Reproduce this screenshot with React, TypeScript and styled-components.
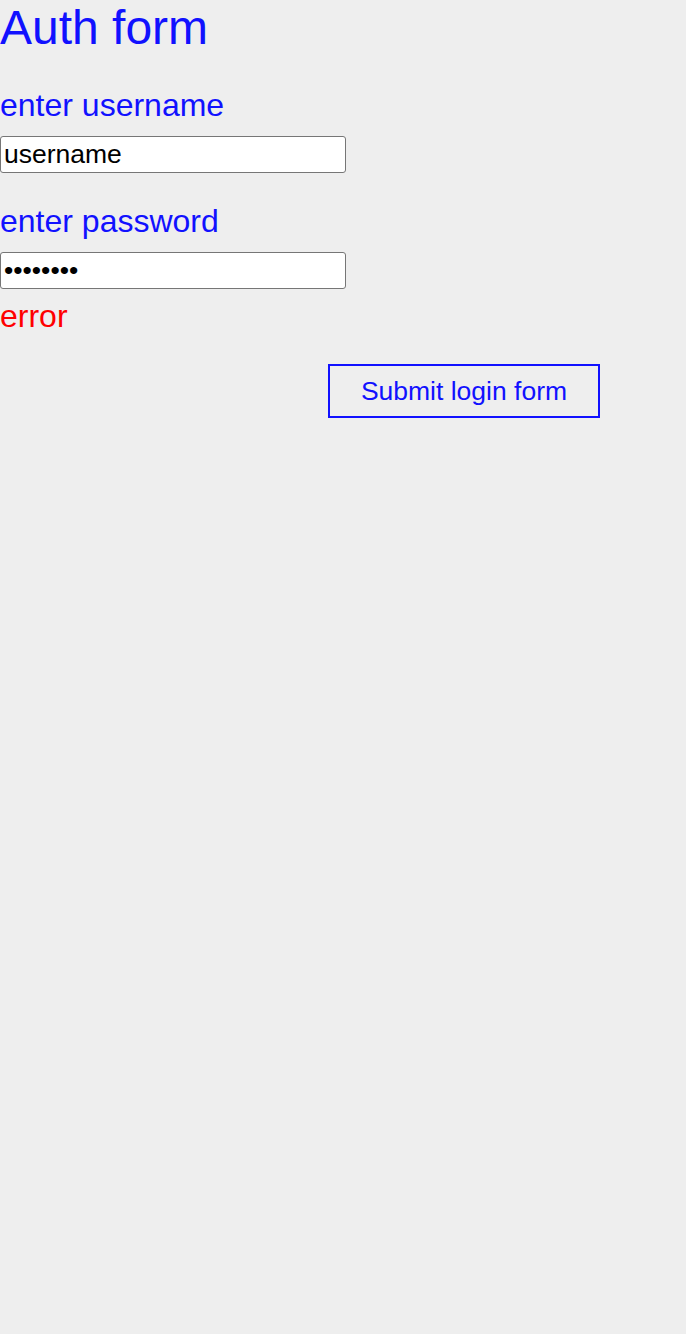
import styled, { createGlobalStyle } from "styled-components";

const GlobalStyle = createGlobalStyle`
  html, body {
    margin: 0;
    padding: 0;
    background-color: #eeeeee;
    min-height: 100%;
  }
  body {
    font-family: "Liberation Sans", Arial, sans-serif;
  }
`;

const App = () => {
  return (
    <Page>
      <GlobalStyle />
      <Title>Auth form</Title>
      <Form onSubmit={(e) => e.preventDefault()}>
        <Label htmlFor="username">enter username</Label>
        <Input id="username" type="text" defaultValue="username" />
        <Label htmlFor="password">enter password</Label>
        <Input id="password" type="password" defaultValue="password" />
        <ErrorText>error</ErrorText>
        <SubmitBtn type="submit">Submit login form</SubmitBtn>
      </Form>
    </Page>
  );
};

export default App;

const Page = styled.div`
  min-height: 1334px;
  background-color: #eeeeee;
`;

const Title = styled.h1`
  margin: 0;
  font-size: 48px;
  font-weight: 400;
  color: #1111ff;
`;

const Form = styled.form`
  display: flex;
  flex-direction: column;
  align-items: flex-start;
  width: 600px;
`;

const Label = styled.label`
  display: block;
  font-size: 32px;
  color: #1111ff;
  margin-top: 32px;
  margin-bottom: 12px;

  & + input + & {
    margin-top: 30px;
  }
`;

const Input = styled.input`
  box-sizing: border-box;
  width: 346px;
  height: 37px;
  margin: 0;
  padding: 1px 3px;
  font-family: "Liberation Sans", Arial, sans-serif;
  font-size: 26.5px;
  color: #000;
  background-color: #fff;
  border: 1px solid #767676;
  border-radius: 3px;
`;

const ErrorText = styled.p`
  margin: 9px 0 0;
  font-size: 32px;
  color: #ff0000;
`;

const SubmitBtn = styled.button`
  align-self: flex-end;
  box-sizing: border-box;
  margin-top: 29px;
  width: 272px;
  height: 54px;
  padding: 0;
  font-family: "Liberation Sans", Arial, sans-serif;
  font-size: 26.5px;
  color: #1111ff;
  background-color: transparent;
  border: 2px solid #1111ff;
  border-radius: 0;
  cursor: pointer;
`;
